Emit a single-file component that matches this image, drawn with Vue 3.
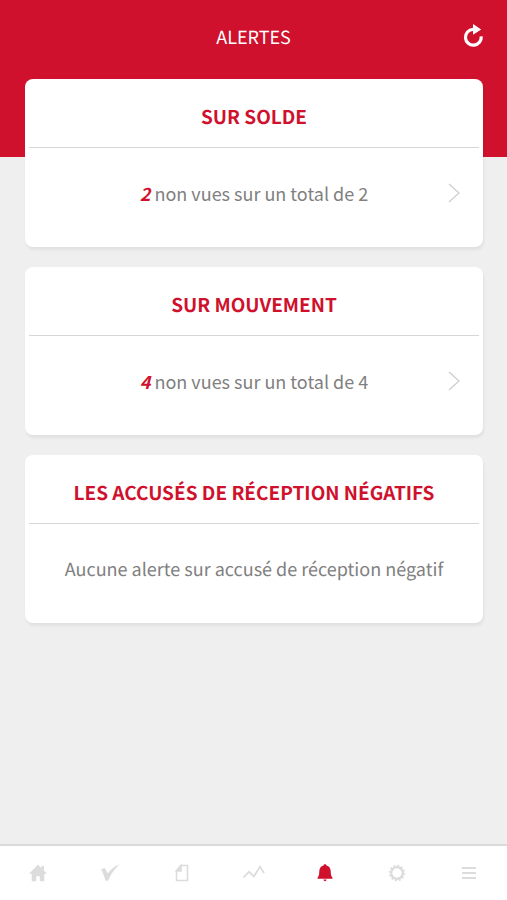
<script setup>
import { ref } from 'vue'

const alerts = ref([
  { id: 'solde', title: 'Sur solde', unseen: 2, total: 2 },
  { id: 'mouvement', title: 'Sur mouvement', unseen: 4, total: 4 },
  {
    id: 'accuses',
    title: 'Les accusés de réception négatifs',
    unseen: 0,
    total: 0,
    empty: 'Aucune alerte sur accusé de réception négatif'
  }
])

const tabs = [
  { id: 'home', label: 'Accueil' },
  { id: 'check', label: 'Validation' },
  { id: 'document', label: 'Documents' },
  { id: 'chart', label: 'Courbes' },
  { id: 'bell', label: 'Alertes' },
  { id: 'settings', label: 'Réglages' },
  { id: 'menu', label: 'Menu' }
]
const activeTab = ref('bell')

function refresh() {
  alerts.value = [...alerts.value]
}
</script>

<template>
  <div class="app">
    <header class="header">
      <h1 class="header__title">ALERTES</h1>
      <button class="header__refresh" type="button" aria-label="Actualiser" @click="refresh">
        <svg width="22" height="24" viewBox="0 0 22 24">
          <path
            d="M12.5 5.4H11A7.9 7.9 0 1 0 19.2 12.4"
            fill="none"
            stroke="currentColor"
            stroke-width="3.2"
          />
          <path d="M11 0 19.2 5.4 11 10.8Z" fill="currentColor" />
        </svg>
      </button>
    </header>

    <main class="cards">
      <section v-for="alert in alerts" :key="alert.id" class="card">
        <h2 class="card__title">{{ alert.title }}</h2>
        <button v-if="alert.total" class="card__body" type="button">
          <span class="card__text">
            <em class="card__count">{{ alert.unseen }}</em> non vues sur un total de
            {{ alert.total }}
          </span>
          <svg class="card__chevron" width="12" height="20" viewBox="0 0 12 20">
            <path d="M1 1 11 10 1 19" fill="none" stroke="currentColor" stroke-width="1.4" />
          </svg>
        </button>
        <p v-else class="card__body">
          <span class="card__text">{{ alert.empty }}</span>
        </p>
      </section>
    </main>

    <nav class="tabs">
      <button
        v-for="tab in tabs"
        :key="tab.id"
        type="button"
        class="tabs__item"
        :class="{ 'tabs__item--active': tab.id === activeTab }"
        :aria-label="tab.label"
        @click="activeTab = tab.id"
      >
        <svg width="24" height="24" viewBox="0 0 24 24" fill="currentColor">
          <path
            v-if="tab.id === 'home'"
            d="M12 3.5 3 12.8h2.7v7.4h4.5v-5h3.6v5h4.5v-7.4H21l-3-3.1V5h-2.4v2.2Z"
          />
          <path
            v-else-if="tab.id === 'check'"
            d="M3 8.2 6.8 7 9.8 12.4C12.8 8.4 16 5.5 21.8 3.2 16.4 8 13 12.8 10 19.8H7.6C6.4 15.6 5 12 3 8.2Z"
          />
          <g
            v-else-if="tab.id === 'document'"
            fill="none"
            stroke="currentColor"
            stroke-width="1.6"
          >
            <path d="M11 4.5h6.5v15h-11V10Z" />
            <path d="M11 4.5V10H6.5Z" fill="currentColor" />
          </g>
          <path
            v-else-if="tab.id === 'chart'"
            d="M1.5 16.5 7 10.8 12 15.4 18 5.6 22 12"
            fill="none"
            stroke="currentColor"
            stroke-width="1.8"
          />
          <g v-else-if="tab.id === 'bell'">
            <path
              d="M12 3.3c.9 0 1.4.5 1.5 1.2 2.8.7 4.1 2.9 4.2 5.6.1 3.5.5 5.3 1.8 6.7v.9h-15v-.9c1.3-1.4 1.7-3.2 1.8-6.7.1-2.7 1.4-4.9 4.2-5.6.1-.7.6-1.2 1.5-1.2Z"
            />
            <path d="M10.5 18.6h3c-.1 1-.7 1.6-1.5 1.6s-1.4-.6-1.5-1.6Z" />
          </g>
          <g v-else-if="tab.id === 'settings'" fill="none" stroke="currentColor">
            <circle cx="12" cy="12" r="5.8" stroke-width="2.2" />
            <circle cx="12" cy="12" r="7.4" stroke-width="1.6" stroke-dasharray="2 1.875" />
          </g>
          <path v-else d="M5 6h14v2H5Zm0 5h14v2H5Zm0 5h14v2H5Z" />
        </svg>
      </button>
    </nav>
  </div>
</template>

<style>
body {
  margin: 0;
  background: #efefef;
}
</style>

<style scoped>
.app {
  display: flex;
  flex-direction: column;
  min-height: 100vh;
  background: #efefef;
  color: #808080;
  font-family: 'Noto Sans CJK SC', 'Noto Sans', sans-serif;
  text-rendering: geometricPrecision;
}

button {
  padding: 0;
  border: 0;
  background: none;
  color: inherit;
  font: inherit;
  cursor: pointer;
}

svg {
  display: block;
}

.header {
  display: grid;
  grid-template-columns: 1fr auto 1fr;
  align-items: start;
  padding: 24px 23px 107px;
  background: #cf112d;
  color: #fff;
}

.header__title {
  grid-column: 2;
  margin: 0;
  font-size: 18px;
  font-weight: 400;
  line-height: 26px;
}

.header__refresh {
  justify-self: end;
}

.cards {
  display: flex;
  flex-direction: column;
  gap: 20px;
  margin-top: -78px;
  padding: 0 24px 20px 25px;
}

.card {
  border-radius: 8px;
  background: #fff;
  box-shadow: 1px 3px 3px rgba(0, 0, 0, 0.06);
}

.card__title {
  margin: 0 4px;
  padding: 26px 0 18px;
  border-bottom: 1px solid #d6d6d6;
  color: #cf112d;
  font-size: 19px;
  font-weight: 600;
  line-height: 24px;
  text-align: center;
  text-transform: uppercase;
}

.card__body {
  display: grid;
  grid-template-columns: 1fr auto 1fr;
  align-items: center;
  box-sizing: border-box;
  width: 100%;
  margin: 0;
  padding: 33px 23px 42px;
  font-size: 18px;
  line-height: 24px;
}

.card__text {
  grid-column: 2;
}

.card__count {
  color: #cf112d;
  font-weight: 600;
}

.card__chevron {
  justify-self: end;
  color: #d0d0d0;
}

.tabs {
  display: flex;
  margin-top: auto;
  padding: 0 2px;
  border-top: 2px solid #dadada;
  background: #fff;
}

.tabs__item {
  display: flex;
  flex: 1;
  justify-content: center;
  padding: 15px 0;
  color: #dcdcdc;
}

.tabs__item--active {
  color: #cf112d;
}
</style>
